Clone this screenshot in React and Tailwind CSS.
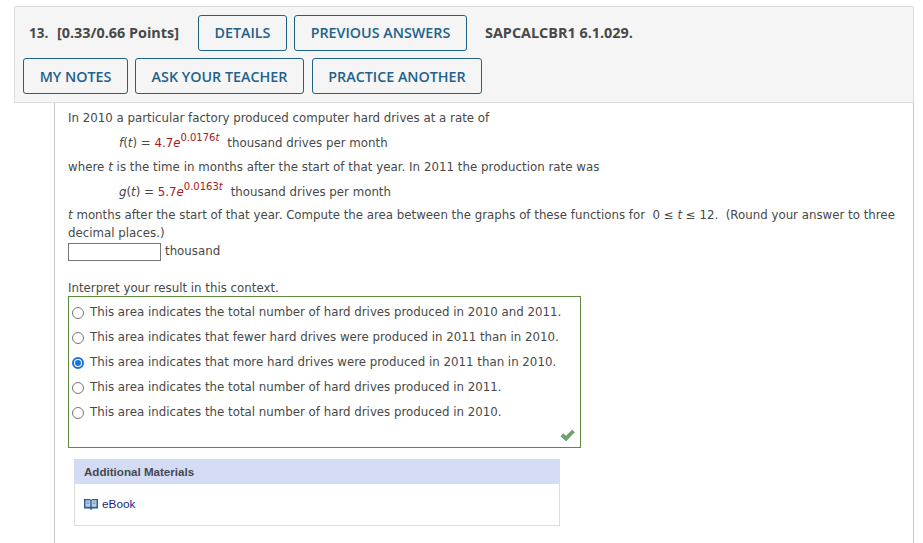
const body = { fontFamily: '"DejaVu Sans", sans-serif' };
const open = { fontFamily: '"Open Sans", sans-serif' };

function Btn({ children, className }) {
  return (
    <div className={`h-[36px] flex items-center justify-center border border-[#1f6286] rounded-[3px] text-[#22618a] text-[14.3px] font-semibold ${className}`} style={open}>
      {children}
    </div>
  );
}

function Opt({ children, checked }) {
  return (
    <div className="h-[25px] flex items-center">
      {checked ? (
        <span className="w-[12px] h-[12px] ml-[3px] rounded-full border-[2px] border-[#1a73d8] flex items-center justify-center shrink-0">
          <span className="w-[6px] h-[6px] rounded-full bg-[#1a73d8]" />
        </span>
      ) : (
        <span className="w-[12px] h-[12px] ml-[3px] rounded-full border border-[#767676] bg-white shrink-0" />
      )}
      <span className="ml-[6px]">{children}</span>
    </div>
  );
}

const T = ({ children }) => <i className="italic">{children}</i>;

export default function App() {
  return (
    <div className="w-[923px] h-[543px] bg-white overflow-hidden pt-[6px] pl-[14px]">
      <div className="w-[900px] h-[97px] bg-[#f5f5f6] border border-[#dddddd] rounded-t-[2px] pl-[8px] pt-[8px]">
        <div className="flex items-center h-[36px]">
          <span className="ml-[6px] text-[13.5px] font-bold text-[#484848] w-[29px]" style={open}>13.</span>
          <span className="text-[14.4px] font-bold text-[#484848] w-[140px] -ml-px mr-px" style={open}>[0.33/0.66 Points]</span>
          <Btn className="w-[89px]">DETAILS</Btn>
          <Btn className="w-[173px] ml-[7px]">PREVIOUS ANSWERS</Btn>
          <span className="ml-[18px] text-[14.4px] font-bold text-[#484848]" style={open}>SAPCALCBR1 6.1.029.</span>
        </div>
        <div className="flex mt-[7px]">
          <Btn className="w-[105px] pt-[1px]">MY NOTES</Btn>
          <Btn className="w-[169px] ml-[7px] pt-[1px]">ASK YOUR TEACHER</Btn>
          <Btn className="w-[170px] ml-[8px] pt-[1px]">PRACTICE ANOTHER</Btn>
        </div>
      </div>
      <div className="ml-[40px] w-[860px] h-[441px] border-l border-r border-[#c8c8c8] pl-[13px] text-[11.8px] text-[#484848]" style={body}>
        <div className="h-[29px] pt-[6px] leading-[18px]">In 2010 a particular factory produced computer hard drives at a rate of</div>
        <div className="h-[24px] pl-[51px] pt-[2px] leading-[18px] flex">
          <span><T>f</T>(<T>t</T>) = <span className="text-[#a52020]">4.7<T>e</T><sup className="text-[10px] leading-none -top-[6px]">0.0176<T>t</T></sup></span></span>
          <span className="ml-[8px]">thousand drives per month</span>
        </div>
        <div className="h-[25px] pt-[2px] leading-[18px] tracking-[0.03px]">where <T>t</T> is the time in months after the start of that year. In 2011 the production rate was</div>
        <div className="h-[24px] pl-[51px] pt-[2px] leading-[18px] flex">
          <span><T>g</T>(<T>t</T>) = <span className="text-[#a52020]">5.7<T>e</T><sup className="text-[10px] leading-none -top-[6px]">0.0163<T>t</T></sup></span></span>
          <span className="ml-[8px]">thousand drives per month</span>
        </div>
        <div className="pt-[1px] leading-[18px] w-[835px]">
          <T>t</T> months after the start of that year. Compute the area between the graphs of these functions for &nbsp;0 ≤ <T>t</T> ≤ 12. &nbsp;(Round your answer to three decimal places.)
        </div>
        <div className="flex items-center h-[18px] mt-[1px]">
          <div className="w-[93px] h-[18px] border border-[#767676] bg-white" />
          <span className="ml-[4px]">thousand</span>
        </div>
        <div className="mt-[18px] h-[17px] leading-[19px]">Interpret your result in this context.</div>
        <div className="relative w-[513px] h-[152px] border border-[#5e8b3f] pt-[3px]">
          <Opt>This area indicates the total number of hard drives produced in 2010 and 2011.</Opt>
          <Opt>This area indicates that fewer hard drives were produced in 2011 than in 2010.</Opt>
          <Opt checked>This area indicates that more hard drives were produced in 2011 than in 2010.</Opt>
          <Opt>This area indicates the total number of hard drives produced in 2011.</Opt>
          <Opt>This area indicates the total number of hard drives produced in 2010.</Opt>
          <svg className="absolute right-[5px] bottom-[5px]" width="15" height="13" viewBox="0 0 15 13">
            <path d="M0.8 7.2 L3.4 4.8 L6 7.2 L12.2 1 L14.4 3.2 L6 12 Z" fill="#6fa56c" stroke="#5c9459" strokeWidth="0.6" />
          </svg>
        </div>
        <div className="ml-[6px] mt-[11px] w-[486px] h-[67px] border border-[#dcdcdc]" style={{ fontFamily: '"Liberation Sans", sans-serif' }}>
          <div className="h-[25px] -mx-px -mt-px bg-[#d3dcf4] flex items-center pl-[10px] text-[11.6px] font-bold text-[#444850]">Additional Materials</div>
          <div className="flex items-center h-[41px] pl-[9px] text-[11.8px] text-[#1d1f80]">
            <svg width="14" height="13" viewBox="0 0 14 13">
              <path d="M0 1 H6 L7 2 L8 1 H14 V10.5 H8.5 L7 12 L5.5 10.5 H0 Z" fill="#2f5f8f" />
              <path d="M1.5 2.2 H6.3 V8.8 H1.5 Z M7.7 2.2 H12.5 V8.8 H7.7 Z" fill="#b9d2e6" />
              <path d="M2.5 4 H5.3 M2.5 5.6 H5.3 M8.7 4 H11.5 M8.7 5.6 H11.5" stroke="#6f93b5" strokeWidth="0.8" />
            </svg>
            <span className="ml-[4px]">eBook</span>
          </div>
        </div>
      </div>
    </div>
  );
}
